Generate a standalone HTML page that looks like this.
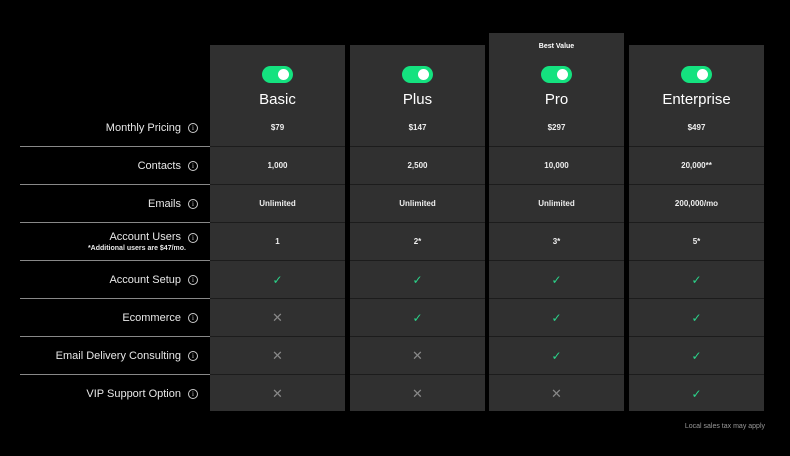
<!DOCTYPE html>
<html><head><meta charset="utf-8"><style>
*{margin:0;padding:0;box-sizing:border-box}
body{width:790px;height:456px;background:#000;position:relative;overflow:hidden;font-family:"Liberation Sans",sans-serif;color:#fff}
.col{position:absolute;top:45px;width:135px;height:366px;background:#303030}
.cell{position:absolute;left:0;width:135px;height:38px;border-top:1px solid #1c1c1c;display:flex;align-items:center;justify-content:center;font-size:8px;font-weight:bold;color:#eee}
.tog{position:absolute;left:52px;top:21px;width:31px;height:17px;border-radius:9px;background:#14e27f}
.tog:after{content:"";position:absolute;right:4px;top:3px;width:11px;height:11px;border-radius:50%;background:#fff}
.title{position:absolute;left:0;width:135px;top:46px;text-align:center;font-size:15px;color:#fff}
.price{position:absolute;left:0;width:135px;top:78px;text-align:center;font-size:8px;font-weight:bold;color:#eee}
.lab{position:absolute;left:20px;width:190px;height:38px;border-top:1px solid #888;display:flex;align-items:center;justify-content:flex-end;padding-right:12px;font-size:11px;color:#e8e8e8}
.i{display:inline-block;width:10px;height:10px;border:1px solid #ccc;border-radius:50%;font-size:7px;line-height:8px;text-align:center;margin-left:7px;font-family:"Liberation Serif",serif;color:#ccc}
.ck{color:#2bd48a;font-size:12px;font-weight:normal}
.x{color:#888;font-size:13px;font-weight:normal}
</style></head><body>
<div class="lab" style="top:109px;border-top:none">Monthly Pricing<span class="i">i</span></div>
<div class="lab" style="top:146px">Contacts<span class="i">i</span></div>
<div class="lab" style="top:184px">Emails<span class="i">i</span></div>
<div class="lab" style="top:222px;flex-direction:column;align-items:flex-end;justify-content:center"><div>Account Users<span class="i">i</span></div><div style="font-size:7px;font-weight:bold;margin-right:12px;margin-top:2px">*Additional users are $47/mo.</div></div>
<div class="lab" style="top:260px">Account Setup<span class="i">i</span></div>
<div class="lab" style="top:298px">Ecommerce<span class="i">i</span></div>
<div class="lab" style="top:336px">Email Delivery Consulting<span class="i">i</span></div>
<div class="lab" style="top:374px">VIP Support Option<span class="i">i</span></div>

<div class="col" style="left:210px"><div class="tog"></div><div class="title">Basic</div><div class="price">$79</div>
<div class="cell" style="top:101px">1,000</div><div class="cell" style="top:139px">Unlimited</div><div class="cell" style="top:177px">1</div>
<div class="cell" style="top:215px"><span class="ck">✓</span></div><div class="cell" style="top:253px"><span class="x">✕</span></div><div class="cell" style="top:291px"><span class="x">✕</span></div><div class="cell" style="top:329px"><span class="x">✕</span></div></div>

<div class="col" style="left:350px"><div class="tog"></div><div class="title">Plus</div><div class="price">$147</div>
<div class="cell" style="top:101px">2,500</div><div class="cell" style="top:139px">Unlimited</div><div class="cell" style="top:177px">2*</div>
<div class="cell" style="top:215px"><span class="ck">✓</span></div><div class="cell" style="top:253px"><span class="ck">✓</span></div><div class="cell" style="top:291px"><span class="x">✕</span></div><div class="cell" style="top:329px"><span class="x">✕</span></div></div>

<div class="col" style="left:489px;top:33px;height:378px"><div style="position:absolute;top:10px;width:135px;text-align:center;font-size:7px;font-weight:bold">Best Value</div>
<div style="position:absolute;top:12px;left:0;width:135px;height:366px"><div class="tog"></div><div class="title">Pro</div><div class="price">$297</div>
<div class="cell" style="top:101px">10,000</div><div class="cell" style="top:139px">Unlimited</div><div class="cell" style="top:177px">3*</div>
<div class="cell" style="top:215px"><span class="ck">✓</span></div><div class="cell" style="top:253px"><span class="ck">✓</span></div><div class="cell" style="top:291px"><span class="ck">✓</span></div><div class="cell" style="top:329px"><span class="x">✕</span></div></div></div>

<div class="col" style="left:629px"><div class="tog"></div><div class="title">Enterprise</div><div class="price">$497</div>
<div class="cell" style="top:101px">20,000**</div><div class="cell" style="top:139px">200,000/mo</div><div class="cell" style="top:177px">5*</div>
<div class="cell" style="top:215px"><span class="ck">✓</span></div><div class="cell" style="top:253px"><span class="ck">✓</span></div><div class="cell" style="top:291px"><span class="ck">✓</span></div><div class="cell" style="top:329px"><span class="ck">✓</span></div></div>

<div style="position:absolute;right:25px;top:423px;font-size:7px;color:#999">Local sales tax may apply</div>
</body></html>
